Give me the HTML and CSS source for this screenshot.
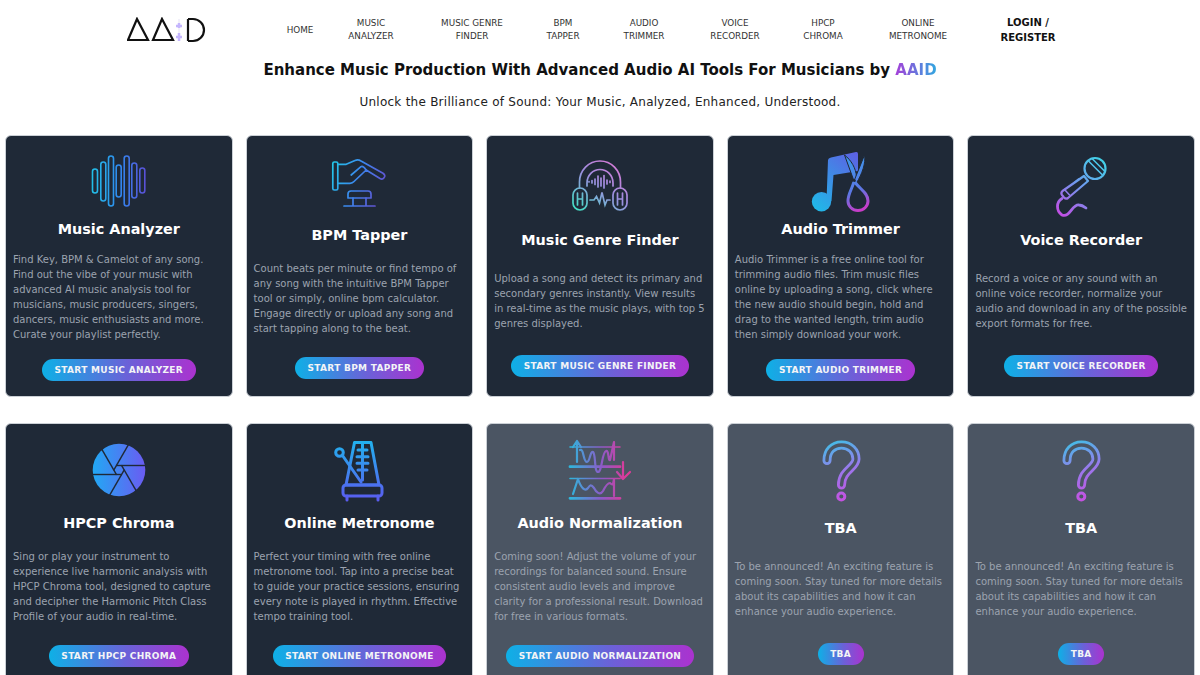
FILE: index.html
```html
<!DOCTYPE html>
<html>
  <head>
    <meta name="viewport" content="width=device-width, initial-scale=1.0" />
    <title>AAID</title>
    <link rel="stylesheet" href="styles.css">
  </head>
  <body>
    <header class="topbar">
      <a class="logo" href="#">
        <svg width="80" height="26" viewBox="0 0 80 26" fill="none" stroke="#111" stroke-width="2.2">
          <path d="M10 2 L1 23 H21 Z" />
          <path d="M35 2 L26 23 H46 Z" />
          <path d="M52 2 V24" stroke="#e5e2f5" stroke-width="1" />
          <path d="M52 6 V11 M49 9 H55 M52 16 V24 M49 20 H55" stroke="#c4b5fd" stroke-width="2.5" />
          <path d="M61 2 V24 M61 2 H66 A11 11 0 0 1 66 24 H61" />
        </svg>
      </a>
      <nav class="menu">
        <a href="#">HOME</a>
        <a href="#">MUSIC<br>ANALYZER</a>
        <a href="#">MUSIC GENRE<br>FINDER</a>
        <a href="#">BPM<br>TAPPER</a>
        <a href="#">AUDIO<br>TRIMMER</a>
        <a href="#">VOICE<br>RECORDER</a>
        <a href="#">HPCP<br>CHROMA</a>
        <a href="#">ONLINE<br>METRONOME</a>
        <a class="login" href="#">LOGIN /<br>REGISTER</a>
      </nav>
    </header>

    <h1>Enhance Music Production With Advanced Audio AI Tools For Musicians by <span class="brand">AAID</span></h1>
    <p class="tagline">Unlock the Brilliance of Sound: Your Music, Analyzed, Enhanced, Understood.</p>

    <main class="tools">
      <div class="card">
        <svg class="icon" viewBox="0 0 60 60" fill="none" stroke-width="1.6">
          <defs>
            <linearGradient id="g1" gradientUnits="userSpaceOnUse" x1="3" y1="0" x2="57" y2="0">
              <stop offset="0" stop-color="#22c0e8" /><stop offset="0.5" stop-color="#2f8af0" /><stop offset="1" stop-color="#5b4fd6" />
            </linearGradient>
          </defs>
          <g stroke="url(#g1)">
            <rect x="3.5" y="17" width="5" height="24" rx="2.5" />
            <rect x="11.8" y="10" width="5" height="39" rx="2.5" />
            <rect x="19.5" y="4" width="5" height="50" rx="2.5" />
            <rect x="27.2" y="13" width="5" height="32" rx="2.5" />
            <rect x="35.2" y="4" width="5" height="50" rx="2.5" />
            <rect x="42.8" y="11" width="5" height="35" rx="2.5" />
            <rect x="50.8" y="16" width="5" height="25" rx="2.5" />
          </g>
        </svg>
        <h3>Music Analyzer</h3>
        <p>Find Key, BPM &amp; Camelot of any song. Find out the vibe of your music with advanced AI music analysis tool for musicians, music producers, singers, dancers, music enthusiasts and more. Curate your playlist perfectly.</p>
        <a class="start" href="#">START MUSIC ANALYZER</a>
      </div>

      <div class="card">
        <svg class="icon" viewBox="0 0 60 60" fill="none" stroke-width="1.7" stroke-linejoin="round" stroke-linecap="round">
          <defs>
            <linearGradient id="g2" gradientUnits="userSpaceOnUse" x1="3" y1="10" x2="57" y2="30">
              <stop offset="0" stop-color="#22c8e8" /><stop offset="0.5" stop-color="#3b86ee" /><stop offset="1" stop-color="#6450d0" />
            </linearGradient>
          </defs>
          <g stroke="url(#g2)">
            <rect x="3.8" y="8" width="5" height="28" rx="1.5" />
            <path d="M8.8 10.3 H17.2 L26 6.5 Q29 5.2 32 7 L54 19.3 Q57 21.5 55 23.8 Q53.5 25.8 51 24.5 L37.2 16 L25 27.5 Q23.5 29.3 21 29.3 H8.8" />
            <path d="M22.2 21 L32 12.7 Q34 11.5 37.2 16" />
            <path d="M19 44 V40 Q19 37 22 37 H39 Q42 37 42 40 V44 Z" />
            <path d="M24 44 V52 M37 44 V52 M15 52 H46" />
          </g>
        </svg>
        <h3>BPM Tapper</h3>
        <p>Count beats per minute or find tempo of any song with the intuitive BPM Tapper tool or simply, online bpm calculator. Engage directly or upload any song and start tapping along to the beat.</p>
        <a class="start" href="#">START BPM TAPPER</a>
      </div>

      <div class="card">
        <svg class="icon" viewBox="0 0 60 60" fill="none" stroke-width="1.7" stroke-linecap="round">
          <defs>
            <linearGradient id="g3" gradientUnits="userSpaceOnUse" x1="6" y1="52" x2="42" y2="4">
              <stop offset="0" stop-color="#45dcc4" /><stop offset="0.55" stop-color="#9c8fe0" /><stop offset="1" stop-color="#d77ad6" />
            </linearGradient>
          </defs>
          <g stroke="url(#g3)">
            <path d="M9.5 32 V26 A20.5 21 0 0 1 50.5 26 V32" />
            <path d="M17 30 V27 A13 13.5 0 0 1 43 27 V30" />
            <rect x="3" y="32" width="14" height="22" rx="7" />
            <rect x="43" y="32" width="14" height="22" rx="7" />
            <path d="M7.5 37 V49 M12.5 37 V49 M7.5 43 H12.5 M47.5 37 V49 M52.5 37 V49 M47.5 43 H52.5" />
            <path d="M19 25.5 V26 M22 24.5 V27 M25 23 V28.5 M28 20 V31 M31 22 V30 M34 19.5 V32 M37 24 V28 M40 25 V26.5" />
            <path d="M20 44 H24 L26.5 40.5 L29.5 47 L32 36.5 L35 49 L37 44 H40" />
          </g>
        </svg>
        <h3>Music Genre Finder</h3>
        <p>Upload a song and detect its primary and secondary genres instantly. View results in real-time as the music plays, with top 5 genres displayed.</p>
        <a class="start" href="#">START MUSIC GENRE FINDER</a>
      </div>

      <div class="card">
        <svg class="icon" viewBox="0 0 60 60" fill="none">
          <defs>
            <linearGradient id="g4" gradientUnits="userSpaceOnUse" x1="2" y1="55" x2="48" y2="5">
              <stop offset="0" stop-color="#20b8e8" /><stop offset="1" stop-color="#5c62e4" />
            </linearGradient>
            <linearGradient id="g4b" gradientUnits="userSpaceOnUse" x1="36" y1="10" x2="56" y2="55">
              <stop offset="0" stop-color="#3f96ec" /><stop offset="0.6" stop-color="#5b78e4" /><stop offset="1" stop-color="#c83cc8" />
            </linearGradient>
          </defs>
          <circle cx="10.5" cy="49.7" r="9.7" fill="url(#g4)" />
          <path d="M15.5 49 L17 8 Q17.2 6 20 5.5 L45 0 Q47 -0.4 47 2 V19 L22.5 23 L20.5 49 Z" fill="url(#g4)" />
          <path d="M43 29 L33.5 3 C40 8 45 16 45.5 25 Z" fill="url(#g4b)" stroke="#1f2937" stroke-width="1" />
          <path d="M43 29 L53.5 3 C55 11 51 22 45.5 31 Z" fill="url(#g4b)" stroke="#1f2937" stroke-width="1" />
          <path d="M42.5 31 C41 37 37 42 37 49 A10 9.5 0 0 0 57 49 C57 41 49 37 44.5 31" stroke="url(#g4b)" stroke-width="3" stroke-linecap="round" />
          <circle cx="43.5" cy="28.5" r="1.3" fill="#1f2937" />
        </svg>
        <h3>Audio Trimmer</h3>
        <p>Audio Trimmer is a free online tool for trimming audio files. Trim music files online by uploading a song, click where the new audio should begin, hold and drag to the wanted length, trim audio then simply download your work.</p>
        <a class="start" href="#">START AUDIO TRIMMER</a>
      </div>

      <div class="card">
        <svg class="icon" viewBox="0 0 60 60" fill="none" stroke-width="2.2" stroke-linecap="round" stroke-linejoin="round">
          <defs>
            <linearGradient id="g5" gradientUnits="userSpaceOnUse" x1="52" y1="2" x2="8" y2="58">
              <stop offset="0" stop-color="#3fd4e6" /><stop offset="0.5" stop-color="#6f9af0" /><stop offset="1" stop-color="#c24ee4" />
            </linearGradient>
          </defs>
          <g stroke="url(#g5)">
            <circle cx="44" cy="12.5" r="10.5" />
            <path d="M37 4.5 L52 19.5 M41 2.5 L54 15.5" stroke-width="1.6" />
            <path d="M33 20 L37 25 L17 42 Q15 43.5 13 41.5 L11 39 Q9.5 37 11.5 35 Z" />
            <path d="M13.5 33.5 L18.5 39 M24 26 L27.5 23" stroke-width="1.6" />
            <path d="M11 42.5 C5 46 5 55 11 59 C19 62 21 48 28 49 C31 49 33 50.5 35 52" stroke-width="2.8" />
          </g>
        </svg>
        <h3>Voice Recorder</h3>
        <p>Record a voice or any sound with an online voice recorder, normalize your audio and download in any of the possible export formats for free.</p>
        <a class="start" href="#">START VOICE RECORDER</a>
      </div>

      <div class="card">
        <svg class="icon" viewBox="0 0 60 60" fill="none">
          <defs>
            <linearGradient id="g6" gradientUnits="userSpaceOnUse" x1="4" y1="28" x2="56" y2="28">
              <stop offset="0" stop-color="#22a8f4" /><stop offset="1" stop-color="#6a5cf2" />
            </linearGradient>
          </defs>
          <circle cx="30" cy="28" r="26.3" fill="url(#g6)" />
          <g stroke="#1f2937" stroke-width="1.4">
            <path d="M27 23.5 H57" />
            <path d="M27 23.5 H57" transform="rotate(60 30 28)" />
            <path d="M27 23.5 H57" transform="rotate(120 30 28)" />
            <path d="M27 23.5 H57" transform="rotate(180 30 28)" />
            <path d="M27 23.5 H57" transform="rotate(240 30 28)" />
            <path d="M27 23.5 H57" transform="rotate(300 30 28)" />
          </g>
        </svg>
        <h3>HPCP Chroma</h3>
        <p>Sing or play your instrument to experience live harmonic analysis with HPCP Chroma tool, designed to capture and decipher the Harmonic Pitch Class Profile of your audio in real-time.</p>
        <a class="start" href="#">START HPCP CHROMA</a>
      </div>

      <div class="card">
        <svg class="icon" viewBox="0 0 60 60" fill="none" stroke-width="3" stroke-linecap="round" stroke-linejoin="round">
          <defs>
            <linearGradient id="g7" gradientUnits="userSpaceOnUse" x1="30" y1="0" x2="30" y2="58">
              <stop offset="0" stop-color="#22b0ee" /><stop offset="1" stop-color="#5a5cf0" />
            </linearGradient>
          </defs>
          <g stroke="url(#g7)">
            <path d="M25.5 0.5 H42 L50 43 H17 Z" />
            <rect x="14" y="43" width="39" height="11" rx="3" />
            <path d="M18 54 V58 M49 54 V58" />
            <path d="M33.5 1 V38 M29 8 H38 M28 14.7 H39 M28 21.3 H39 M29 28 H38" />
            <circle cx="10.5" cy="10.5" r="3.8" />
            <path d="M13.5 13.5 L32 40" />
          </g>
        </svg>
        <h3>Online Metronome</h3>
        <p>Perfect your timing with free online metronome tool. Tap into a precise beat to guide your practice sessions, ensuring every note is played in rhythm. Effective tempo training tool.</p>
        <a class="start" href="#">START ONLINE METRONOME</a>
      </div>

      <div class="card soon">
        <svg class="icon" viewBox="0 0 60 60" fill="none" stroke-width="2.2" stroke-linecap="round" stroke-linejoin="round">
          <defs>
            <linearGradient id="g8" gradientUnits="userSpaceOnUse" x1="0" y1="0" x2="56" y2="0">
              <stop offset="0" stop-color="#2fb6dc" /><stop offset="0.55" stop-color="#8a5cc8" /><stop offset="1" stop-color="#dc3a98" />
            </linearGradient>
          </defs>
          <g stroke="url(#g8)">
            <path d="M0 24.7 H50 M0 56.3 H50" stroke-width="2.8" />
            <path d="M0 5 H50 M0 36.5 H50" stroke-width="1.6" />
            <path d="M7 20 V0 M3 5 L7 -1 L11 5 M10 8 C14 6 13 20 17 20 C20 20 20 9 23 10 C26 12 24 30 28 30 C32 30 32 10 36 9 C39 8 38 19 40 18 L44 0 V18" />
            <path d="M3 52 L8 37 C11 46 15 50 18 46 C20 43 21 42 24 46 C26 50 30 54 33 49 C35 45 37 41 40 41 C42 43 43 44 44 37 V54" />
            <path d="M53 20 V36 M47 30 L53 37 L60 30" />
          </g>
        </svg>
        <h3>Audio Normalization</h3>
        <p>Coming soon! Adjust the volume of your recordings for balanced sound. Ensure consistent audio levels and improve clarity for a professional result. Download for free in various formats.</p>
        <a class="start" href="#">START AUDIO NORMALIZATION</a>
      </div>

      <div class="card soon">
        <svg class="icon" viewBox="0 0 60 60" fill="none" stroke-linecap="round" stroke-linejoin="round">
          <defs>
            <linearGradient id="g9" gradientUnits="userSpaceOnUse" x1="14" y1="0" x2="34" y2="58">
              <stop offset="0" stop-color="#45bce6" /><stop offset="0.5" stop-color="#9a78ec" /><stop offset="1" stop-color="#c84ee0" />
            </linearGradient>
          </defs>
          <path d="M16 16.5 C16 7 22 1 30.5 1 C39 1 45 7 45 15 C45 24 30.5 26 30.5 41" stroke="url(#g9)" stroke-width="9" />
          <path d="M16 16.5 C16 7 22 1 30.5 1 C39 1 45 7 45 15 C45 24 30.5 26 30.5 41" stroke="#4b5563" stroke-width="3.4" />
          <circle cx="30.3" cy="52.5" r="3.5" stroke="url(#g9)" stroke-width="3" />
        </svg>
        <h3>TBA</h3>
        <p>To be announced! An exciting feature is coming soon. Stay tuned for more details about its capabilities and how it can enhance your audio experience.</p>
        <a class="start" href="#">TBA</a>
      </div>

      <div class="card soon">
        <svg class="icon" viewBox="0 0 60 60" fill="none" stroke-linecap="round" stroke-linejoin="round">
          <defs>
            <linearGradient id="g10" gradientUnits="userSpaceOnUse" x1="14" y1="0" x2="34" y2="58">
              <stop offset="0" stop-color="#45bce6" /><stop offset="0.5" stop-color="#9a78ec" /><stop offset="1" stop-color="#c84ee0" />
            </linearGradient>
          </defs>
          <path d="M16 16.5 C16 7 22 1 30.5 1 C39 1 45 7 45 15 C45 24 30.5 26 30.5 41" stroke="url(#g10)" stroke-width="9" />
          <path d="M16 16.5 C16 7 22 1 30.5 1 C39 1 45 7 45 15 C45 24 30.5 26 30.5 41" stroke="#4b5563" stroke-width="3.4" />
          <circle cx="30.3" cy="52.5" r="3.5" stroke="url(#g10)" stroke-width="3" />
        </svg>
        <h3>TBA</h3>
        <p>To be announced! An exciting feature is coming soon. Stay tuned for more details about its capabilities and how it can enhance your audio experience.</p>
        <a class="start" href="#">TBA</a>
      </div>
    </main>
  </body>
</html>
```

FILE: styles.css
```css
* {
  box-sizing: border-box;
  margin: 0;
  padding: 0;
}

body {
  font-family: "DejaVu Sans", sans-serif;
  background: white;
  color: #111;
}

a {
  text-decoration: none;
  color: inherit;
}

.topbar {
  display: flex;
  align-items: center;
  height: 60px;
  padding-left: 127px;
}

.logo {
  display: flex;
  width: 137px;
}

.menu {
  display: grid;
  grid-template-columns: 72px 70px 132px 50px 112px 70px 106px 84px 136px;
  align-items: center;
  text-align: center;
  font-size: 8.8px;
  line-height: 13px;
  color: #333;
}

.login {
  font-weight: bold;
  font-size: 10px;
  line-height: 15px;
  color: #111;
}

h1 {
  margin-top: -1px;
  font-size: 15px;
  line-height: 22px;
  text-align: center;
}

.brand {
  background: linear-gradient(90deg, #a63fd8, #2fa8e0);
  -webkit-background-clip: text;
  background-clip: text;
  color: transparent;
}

.tagline {
  margin-top: 11px;
  font-size: 12px;
  line-height: 20px;
  letter-spacing: 0.25px;
  text-align: center;
  color: #222;
}

.tools {
  display: grid;
  grid-template-columns: repeat(5, 1fr);
  gap: 26px 13px;
  margin-top: 23px;
  padding: 0 5px;
}

.card {
  display: flex;
  flex-direction: column;
  align-items: center;
  justify-content: space-around;
  min-height: 262px;
  padding: 16px 7px 15px;
  background: #1f2937;
  border: 1px solid #cbd0d6;
  border-radius: 6px;
}

.card.soon {
  background: #4b5563;
}

.icon {
  width: 60px;
  height: 60px;
  overflow: visible;
}

h3 {
  margin-top: 5px;
  font-size: 14.4px;
  line-height: 24px;
  color: white;
  text-align: center;
}

.card p {
  width: 100%;
  margin-top: 11px;
  font-size: 10px;
  line-height: 15px;
  color: #9ca3af;
}

.start {
  margin-top: 17px;
  padding: 0 12.5px;
  font-size: 9px;
  font-weight: bold;
  line-height: 22px;
  letter-spacing: 0.3px;
  color: #f3f4f6;
  background: linear-gradient(90deg, #0eb0e6, #6a62d8 55%, #ab32cf);
  border-radius: 11px;
}
```
